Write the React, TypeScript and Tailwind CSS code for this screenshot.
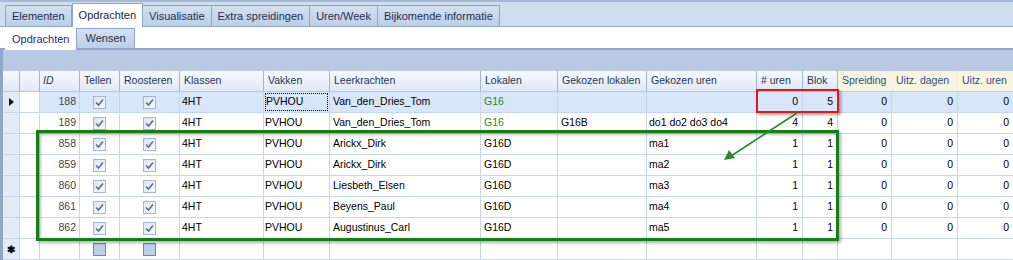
import React from 'react';

const cols = [
  { key: 'ind', w: 17 },
  { key: 'blank', w: 20 },
  { key: 'id', w: 40, label: 'ID', right: true },
  { key: 'tellen', w: 40, label: 'Tellen', check: true },
  { key: 'roost', w: 60, label: 'Roosteren', check: true },
  { key: 'klas', w: 84, label: 'Klassen' },
  { key: 'vak', w: 66, label: 'Vakken' },
  { key: 'lk', w: 151, label: 'Leerkrachten' },
  { key: 'lok', w: 77, label: 'Lokalen' },
  { key: 'glok', w: 89, label: 'Gekozen lokalen' },
  { key: 'guren', w: 110, label: 'Gekozen uren' },
  { key: 'uren', w: 46, label: '# uren', right: true },
  { key: 'blok', w: 35, label: 'Blok', right: true },
  { key: 'spr', w: 54, label: 'Spreiding', right: true, yellow: true },
  { key: 'ud', w: 66, label: 'Uitz. dagen', right: true, yellow: true },
  { key: 'uu', w: 60, label: 'Uitz. uren', right: true, yellow: true },
];

type Row = {
  id: number;
  lk: string;
  lok: string;
  glok: string;
  guren: string;
  uren: number;
  blok: number;
  green?: boolean;
};

const rows: Row[] = [
  { id: 188, lk: 'Van_den_Dries_Tom', lok: 'G16', glok: '', guren: '', uren: 0, blok: 5, green: true },
  { id: 189, lk: 'Van_den_Dries_Tom', lok: 'G16', glok: 'G16B', guren: 'do1 do2 do3 do4', uren: 4, blok: 4, green: true },
  { id: 858, lk: 'Arickx_Dirk', lok: 'G16D', glok: '', guren: 'ma1', uren: 1, blok: 1 },
  { id: 859, lk: 'Arickx_Dirk', lok: 'G16D', glok: '', guren: 'ma2', uren: 1, blok: 1 },
  { id: 860, lk: 'Liesbeth_Elsen', lok: 'G16D', glok: '', guren: 'ma3', uren: 1, blok: 1 },
  { id: 861, lk: 'Beyens_Paul', lok: 'G16D', glok: '', guren: 'ma4', uren: 1, blok: 1 },
  { id: 862, lk: 'Augustinus_Carl', lok: 'G16D', glok: '', guren: 'ma5', uren: 1, blok: 1 },
];

const Check = ({ on }: { on: boolean }) =>
  on ? (
    <span className="flex h-[13px] w-[13px] items-center justify-center border border-[#a7b6cc] bg-gradient-to-br from-[#dfe5ee] to-[#f7f9fc]">
      <svg width="9" height="9" viewBox="0 0 9 9">
        <path d="M1 4.5 L3.5 7 L8 1.5" fill="none" stroke="#56709a" strokeWidth="1.6" />
      </svg>
    </span>
  ) : (
    <span className="h-[13px] w-[13px] border border-[#6d87b1] bg-[#b9cfea]" />
  );

const mainTabs = ['Elementen', 'Opdrachten', 'Visualisatie', 'Extra spreidingen', 'Uren/Week', 'Bijkomende informatie'];

const cell = 'flex shrink-0 items-center overflow-hidden whitespace-nowrap border-r border-[#c5d6ee]';

export default function App() {
  return (
    <div className="relative h-[260px] w-[1013px] overflow-hidden bg-white font-['Liberation_Sans',Arial,sans-serif] text-[10.5px] text-black">
      {/* main tabs */}
      <div className="flex h-[27px] items-end border-t-2 border-b border-t-[#a6b9d4] border-b-[#8ea6c9] bg-[#d0ddef] pl-[5px]">
        {mainTabs.map((t) =>
          t === 'Opdrachten' ? (
            <div key={t} className="-mb-px flex h-[24px] items-center whitespace-nowrap border border-b-0 border-[#8ea6c9] bg-white px-[6px] text-[11px] text-[#15284a]">
              {t}
            </div>
          ) : (
            <div key={t} className="flex h-[21px] items-center whitespace-nowrap border border-b-0 border-l-0 border-[#8ea6c9] bg-gradient-to-b from-[#d3e0f1] to-[#bccfe8] px-[6px] text-[11px] text-[#1e2f4d] first:border-l">
              {t}
            </div>
          )
        )}
      </div>

      {/* sub tabs */}
      <div className="flex h-[23px] items-end border-b-2 border-[#8ea6c9] bg-white pl-[5px]">
        <div className="-mb-[2px] flex h-[22px] items-center border-r border-[#8ea6c9] bg-white px-[7px] text-[11px] text-[#2a2a80]">
          Opdrachten
        </div>
        <div className="flex h-[20px] items-center border border-b-0 border-l-0 border-[#8ea6c9] bg-gradient-to-b from-[#d3e0f1] to-[#bccfe8] px-[8px] text-[11px] text-[#1e2f4d]">
          Wensen
        </div>
      </div>

      {/* grid */}
      <div className="border-l-[3px] border-[#8fa6c9]">
        <div className="h-[21px] bg-[#b8c9e1]" />

        {/* header */}
        <div className="flex h-[21px] border-b border-[#b7c8e2]">
          {cols.map((c) => (
            <div
              key={c.key}
              style={{ width: c.w }}
              className={`flex shrink-0 items-center overflow-hidden whitespace-nowrap border-r px-[4px] ${
                c.yellow
                  ? 'border-[#f3f1da] bg-[#f7f5df] text-[#2c4f86]'
                  : 'border-[#9fb5d4] bg-gradient-to-b from-[#f8fafe] to-[#dfe8f5] text-[#1d355a]'
              } ${c.key === 'id' ? 'italic pl-[3px]' : ''}`}
            >
              {c.label}
            </div>
          ))}
        </div>

        {rows.map((r, i) => {
          const sel = i === 0;
          return (
            <div key={r.id} className="flex h-[21px] border-b border-[#c5d6ee]">
              <div className="flex w-[17px] shrink-0 items-center justify-center border-r border-[#c5d6ee] bg-[#e3ebf7]">
                {sel && (
                  <svg width="5" height="8" viewBox="0 0 5 8">
                    <path d="M0 0 L5 4 L0 8 Z" fill="#111" />
                  </svg>
                )}
              </div>
              <div className="w-[20px] shrink-0 border-r border-[#c5d6ee]" />
              <div className={`flex flex-1 ${sel ? 'bg-[#d8e6f9]' : ''}`}>
                <div className={`${cell} w-[40px] justify-end pr-[3px] text-[#444]`}>{r.id}</div>
                <div className={`${cell} w-[40px] justify-center`}><Check on /></div>
                <div className={`${cell} w-[60px] justify-center`}><Check on /></div>
                <div className={`${cell} w-[84px] pl-[2px]`}>4HT</div>
                <div className={`${cell} w-[66px] pl-[1px]`}>
                  {sel ? (
                    <span className="flex h-[18px] w-[63px] items-center border border-dotted border-black">PVHOU</span>
                  ) : (
                    'PVHOU'
                  )}
                </div>
                <div className={`${cell} w-[151px] pl-[3px]`}>{r.lk}</div>
                <div className={`${cell} w-[77px] pl-[3px] ${r.green ? 'text-[#1f8a1f]' : ''}`}>{r.lok}</div>
                <div className={`${cell} w-[89px] pl-[3px]`}>{r.glok}</div>
                <div className={`${cell} w-[110px] pl-[2px]`}>{r.guren}</div>
                <div className={`${cell} w-[46px] justify-end pr-[4px]`}>{r.uren}</div>
                <div className={`${cell} w-[35px] justify-end pr-[4px]`}>{r.blok}</div>
                <div className={`${cell} w-[54px] justify-end pr-[4px]`}>0</div>
                <div className={`${cell} w-[66px] justify-end pr-[4px]`}>0</div>
                <div className={`${cell} w-[60px] justify-end pr-[8px]`}>0</div>
              </div>
            </div>
          );
        })}

        {/* new row */}
        <div className="flex h-[21px] border-b border-[#c5d6ee]">
          <div className="flex w-[17px] shrink-0 items-center justify-center border-r border-[#c5d6ee] bg-[#e3ebf7] text-[10px] font-bold">✱</div>
          {cols.slice(1).map((c) => (
            <div key={c.key} style={{ width: c.w }} className="flex shrink-0 items-center justify-center border-r border-[#c5d6ee]">
              {c.check && <Check on={false} />}
            </div>
          ))}
        </div>
      </div>

      {/* annotations */}
      <div className="absolute left-[756px] top-[89px] h-[24px] w-[83px] border-2 border-[#e8141b] shadow-[2px_2px_3px_rgba(0,0,0,0.35)]" />
      <div className="absolute left-[36px] top-[130px] h-[111px] w-[803px] border-[3px] border-[#177d17] shadow-[2px_2px_3px_rgba(0,0,0,0.3),inset_2px_2px_3px_rgba(0,0,0,0.25)]" />
      <svg className="absolute left-0 top-0" width="1013" height="260">
        <line x1="797" y1="113" x2="731" y2="156" stroke="#2a8a2a" strokeWidth="1.6" />
        <path d="M724 160 L729 150 L735 158 Z" fill="#2a8a2a" />
      </svg>
    </div>
  );
}
